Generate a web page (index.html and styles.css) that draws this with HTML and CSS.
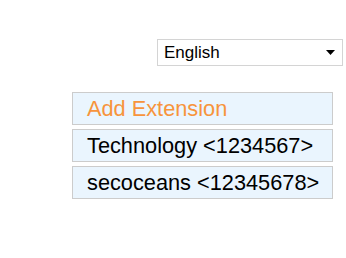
FILE: index.html
```html
<!DOCTYPE html>
<html lang="en">
<head>
    <meta charset="UTF-8">
    <title>Extensions</title>
    <link rel="stylesheet" href="styles.css">
</head>
<body>
    <div class="page">
        <div class="lang-bar">
            <div class="lang-select">
                <select id="lang">
                    <option value="en">English</option>
                </select>
                <svg class="arrow" width="9" height="5" viewBox="0 0 9 5"><path d="M0 0h9L4.5 5z" fill="#000"/></svg>
            </div>
        </div>

        <ul class="ext-list">
            <li class="ext-item add">Add Extension</li>
            <li class="ext-item">Technology &lt;1234567&gt;</li>
            <li class="ext-item">secoceans &lt;12345678&gt;</li>
        </ul>
    </div>
</body>
</html>
```

FILE: styles.css
```css
body {
    margin: 0;
    font-family: "Liberation Sans", Arial, sans-serif;
    background: #fff;
}
.page {
    width: 346px;
    height: 258px;
}
.lang-bar {
    display: flex;
    justify-content: flex-end;
    padding: 39px 3px 0 0;
}
.lang-select {
    position: relative;
    width: 186px;
    height: 27px;
}
.lang-select select {
    appearance: none;
    -webkit-appearance: none;
    width: 100%;
    height: 100%;
    margin: 0;
    padding: 0 0 0 6px;
    border: 1px solid #d4d4d4;
    border-radius: 0;
    background: #fff;
    color: #000;
    font-family: "Liberation Sans", Arial, sans-serif;
    font-size: 17px;
    outline: none;
}
.lang-select .arrow {
    position: absolute;
    right: 8px;
    top: 11px;
    pointer-events: none;
}
.ext-list {
    list-style: none;
    margin: 26px 0 0 72px;
    padding: 0;
    width: 261px;
    display: flex;
    flex-direction: column;
    gap: 4px;
}
.ext-item {
    box-sizing: border-box;
    height: 33px;
    padding: 0 0 0 14px;
    display: flex;
    align-items: center;
    background: #eaf5fe;
    border: 1px solid #cccccc;
    font-size: 21.75px;
    color: #000;
}
.ext-item.add {
    color: #f7943c;
}
```
